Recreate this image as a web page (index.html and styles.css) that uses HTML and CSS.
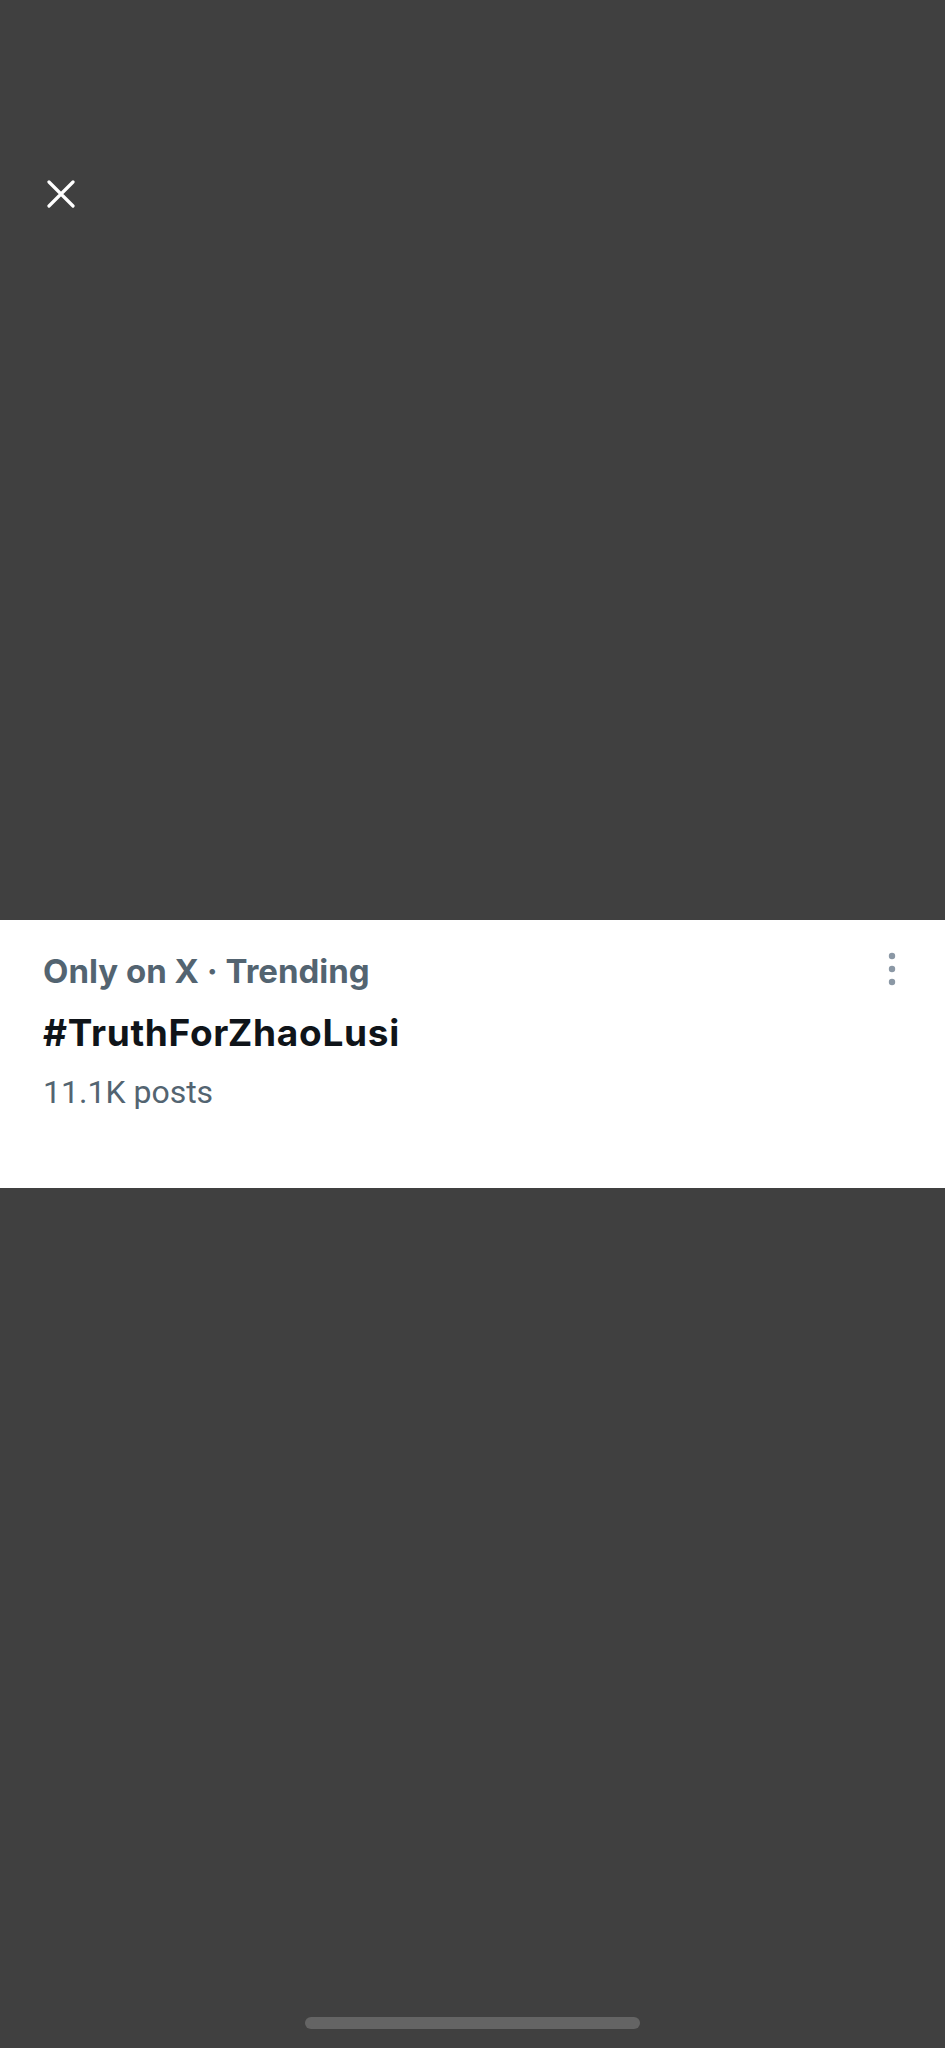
FILE: index.html
```html
<!DOCTYPE html>
<html lang="en">
<head>
<meta charset="UTF-8">
<meta name="viewport" content="width=device-width, initial-scale=1.0">
<title>Trend</title>
<link rel="stylesheet" href="styles.css">
</head>
<body>
<div class="viewer">
    <button class="close" aria-label="Close">
        <svg width="28" height="28" viewBox="0 0 28 28">
            <path d="M2 2 L26 26 M26 2 L2 26" stroke="#fff" stroke-width="3.2" stroke-linecap="round" fill="none"/>
        </svg>
    </button>
</div>

<div class="trend">
    <div class="trend-text">
        <div class="trend-meta">Only on X · Trending</div>
        <div class="trend-name">#TruthForZhaoLusi</div>
        <div class="trend-count">11.1K posts</div>
    </div>
    <div class="more">
        <svg width="8" height="34" viewBox="0 0 8 34">
            <circle cx="4" cy="4" r="3.2" fill="#8b98a5"/>
            <circle cx="4" cy="17" r="3.2" fill="#8b98a5"/>
            <circle cx="4" cy="30" r="3.2" fill="#8b98a5"/>
        </svg>
    </div>
</div>

<div class="rest">
    <div class="home-bar"></div>
</div>
</body>
</html>
```

FILE: styles.css
```css
body {
    font-family: Roboto, "Liberation Sans", sans-serif;
    margin: 0;
    padding: 0;
    background-color: #404040;
    min-height: 2048px;
    display: flex;
    flex-direction: column;
}

.viewer {
    height: 920px;
    padding: 180px 0 0 47px;
    box-sizing: border-box;
}

.close {
    background: none;
    border: none;
    padding: 0;
    width: 28px;
    height: 28px;
    cursor: pointer;
}

.close svg {
    display: block;
}

.trend {
    height: 268px;
    background-color: #fff;
    display: flex;
    justify-content: space-between;
    padding: 31px 49px 0 43px;
    box-sizing: border-box;
}

.trend-meta {
    font-family: Inter, Roboto, sans-serif;
    font-size: 33px;
    line-height: 40px;
    font-weight: 700;
    color: #536471;
}

.trend-name {
    font-family: Inter, Roboto, sans-serif;
    font-size: 37px;
    line-height: 44px;
    letter-spacing: 0.7px;
    font-weight: 700;
    color: #0f1419;
    margin-top: 20px;
}

.trend-count {
    font-size: 32px;
    line-height: 40px;
    color: #536471;
    margin-top: 17px;
}

.more {
    padding-top: 1px;
}

.more svg {
    display: block;
}

.rest {
    flex: 1;
    display: flex;
    align-items: flex-end;
    justify-content: center;
    padding-bottom: 19px;
}

.home-bar {
    width: 335px;
    height: 12px;
    border-radius: 6px;
    background-color: #646464;
}
```
